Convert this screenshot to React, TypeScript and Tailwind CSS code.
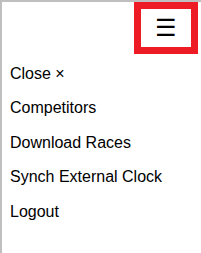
import React from 'react'

const links = ['Competitors', 'Download Races', 'Synch External Clock', 'Logout']

const App = (): JSX.Element => {
  return (
    <div className="h-[253px] w-[201px] overflow-hidden border-l-2 border-t-2 border-[#bfbfbf] bg-white font-['Liberation_Sans',Arial,sans-serif] text-black">
      <div className="flex justify-end pr-[3px]">
        <button className="flex h-[52px] w-[64px] items-center justify-center border-[7px] border-[#ed1c24] bg-white text-[24px] leading-none">
          ☰
        </button>
      </div>
      <nav className="mt-[3px] flex flex-col">
        <a className="px-2 py-2 text-[16px] leading-[1.15]">Close ×</a>
        {links.map((label) => (
          <a key={label} className="px-2 py-2 text-[16px] leading-[1.15]">
            {label}
          </a>
        ))}
      </nav>
    </div>
  )
}

export default App
